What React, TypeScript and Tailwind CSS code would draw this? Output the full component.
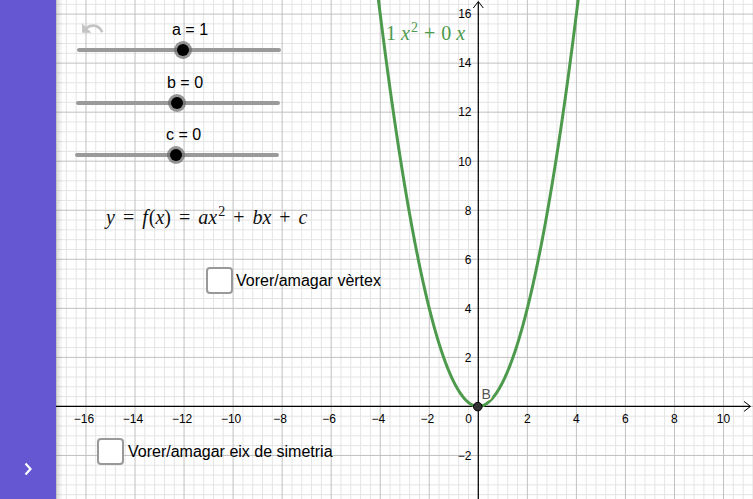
import React from "react";

const OX = 478.3;
const OY = 406.4;
const S = 24.52;
const MINOR = S * 0.4;

function Graph() {
  const vLines: { x: number; major: boolean }[] = [];
  for (let k = -43; k <= 28; k++) {
    vLines.push({ x: OX + k * MINOR, major: k % 5 === 0 });
  }
  const hLines: { y: number; major: boolean }[] = [];
  for (let k = -42; k <= 10; k++) {
    hLines.push({ y: OY + k * MINOR, major: k % 5 === 0 });
  }
  const xLabels: number[] = [];
  for (let v = -16; v <= 10; v += 2) if (v !== 0) xLabels.push(v);
  const yLabels: number[] = [-2, 2, 4, 6, 8, 10, 12, 14, 16];
  const pts: string[] = [];
  for (let x = -4.25; x <= 4.2501; x += 0.02) {
    const px = OX + x * S;
    const py = OY - x * x * S;
    pts.push(`${px.toFixed(2)},${py.toFixed(2)}`);
  }
  const fmt = (v: number) => (v < 0 ? "\u2212" + Math.abs(v) : String(v));
  return (
    <svg
      className="absolute inset-0"
      width={697}
      height={499}
      viewBox="56 0 697 499"
      style={{ fontFamily: '"Liberation Sans", Arial, sans-serif' }}
    >
      {vLines
        .filter((l) => !l.major)
        .map((l, i) => (
          <line key={"vm" + i} x1={l.x} x2={l.x} y1={0} y2={499} stroke="#e4e4e4" strokeWidth={1} />
        ))}
      {hLines
        .filter((l) => !l.major)
        .map((l, i) => (
          <line key={"hm" + i} y1={l.y} y2={l.y} x1={56} x2={753} stroke="#e4e4e4" strokeWidth={1} />
        ))}
      {vLines
        .filter((l) => l.major)
        .map((l, i) => (
          <line key={"vM" + i} x1={l.x} x2={l.x} y1={0} y2={499} stroke="#c0c0c0" strokeWidth={1} />
        ))}
      {hLines
        .filter((l) => l.major)
        .map((l, i) => (
          <line key={"hM" + i} y1={l.y} y2={l.y} x1={56} x2={753} stroke="#c0c0c0" strokeWidth={1} />
        ))}
      {/* axes */}
      <line x1={56} x2={750} y1={OY} y2={OY} stroke="#000" strokeWidth={1.2} />
      <polyline points={`744,401.4 750.5,${OY} 744,411.4`} fill="none" stroke="#000" strokeWidth={1} />
      <line x1={OX} x2={OX} y1={2} y2={499} stroke="#000" strokeWidth={1.2} />
      <polyline points={`473.3,8 ${OX},1.5 483.3,8`} fill="none" stroke="#000" strokeWidth={1} />
      {/* labels */}
      {xLabels.map((v) => (
        <text key={"xl" + v} x={OX + v * S - (v < 0 ? 2 : 0)} y={422.5} fontSize={12} textAnchor="middle" fill="#000">
          {fmt(v)}
        </text>
      ))}
      <text x={468.7} y={422.5} fontSize={12} textAnchor="middle" fill="#000">
        0
      </text>
      {yLabels.map((v) => (
        <text key={"yl" + v} x={471.5} y={OY - v * S + 4.3} fontSize={12} textAnchor="end" fill="#000">
          {fmt(v)}
        </text>
      ))}
      {/* parabola */}
      <polyline points={pts.join(" ")} fill="none" stroke="#4d9a4d" strokeWidth={3} strokeLinejoin="round" />
      {/* point B */}
      <text x={481.5} y={398.5} fontSize={14} fill="#555" stroke="#fff" strokeWidth={3} paintOrder="stroke">
        B
      </text>
      <circle cx={477.8} cy={406.6} r={4.3} fill="#333" stroke="#000" strokeWidth={1} />
    </svg>
  );
}

function Slider({ label, pad, knob }: { label: string; pad: string; knob: string }) {
  return (
    <div className="flex w-[204px] flex-col gap-[8px]">
      <div className={`${pad} text-[16px] leading-[20px] text-black`}>{label}</div>
      <div className="relative h-[4px] rounded-full bg-[#9a9a9a]">
        <div className={`absolute top-1/2 ${knob} flex h-[18px] w-[18px] -translate-x-1/2 -translate-y-1/2 items-center justify-center rounded-full bg-[#6a6a6a]/70`}>
          <div className="h-[12px] w-[12px] rounded-full bg-black" />
        </div>
      </div>
    </div>
  );
}

function Check({ text, gap }: { text: string; gap: string }) {
  return (
    <label className={`flex items-center ${gap} text-[16px] leading-[20px] text-black`}>
      <span className="h-[27px] w-[27px] rounded-[4px] border-2 border-[#999] bg-white" />
      <span>{text}</span>
    </label>
  );
}

const serif = { fontFamily: '"Liberation Serif", "Times New Roman", serif' };

export default function App() {
  return (
    <div
      className="flex h-[499px] w-[753px] overflow-hidden bg-white"
      style={{ fontFamily: '"Liberation Sans", Arial, sans-serif' }}
    >
      <aside className="flex w-[56px] shrink-0 flex-col items-center justify-end bg-[#6557d2] pb-[23px]">
        <svg width="10" height="14" viewBox="0 0 10 14">
          <polyline points="2.5,1.5 7.5,7 2.5,12.5" fill="none" stroke="#fff" strokeWidth={2.2} />
        </svg>
      </aside>
      <main className="relative flex-1">
        <Graph />
        <div className="absolute left-0 top-0 h-full w-[7px] bg-gradient-to-r from-black/15 to-transparent" />

        {/* undo icon */}
        <svg className="absolute left-[24px] top-[16px]" width="25" height="25" viewBox="0 0 24 24">
          <path
            d="M12.5 8c-2.65 0-5.05.99-6.9 2.6L2 7v9h9l-3.62-3.62c1.39-1.16 3.16-1.88 5.12-1.88 3.54 0 6.55 2.31 7.6 5.5l2.37-.78C21.08 11.03 17.15 8 12.5 8z"
            fill="#c4c4c4"
          />
        </svg>

        {/* sliders */}
        <div className="absolute left-[19px] top-[20px] flex flex-col gap-[20.5px]">
          <div className="pl-[2px]">
            <Slider label="a = 1" pad="pl-[95px]" knob="left-[106px]" />
          </div>
          <div className="pl-[1px]">
            <Slider label="b = 0" pad="pl-[91px]" knob="left-[101px]" />
          </div>
          <Slider label="c = 0" pad="pl-[91px]" knob="left-[101px]" />
        </div>

        {/* formula */}
        <div
          className="absolute left-[50px] top-[205px] whitespace-nowrap text-[20px] leading-[24px] text-[#111]"
          style={serif}
        >
          <i>y</i>
          <span className="mx-[8px]">=</span>
          <i className="pr-[1px]">f</i>(<i>x</i>)<span className="mx-[8px]">=</span>
          <i>ax</i>
          <sup className="-top-[0.6em] ml-[1px] text-[14px]">2</sup>
          <span className="mx-[8px]">+</span>
          <i>bx</i>
          <span className="mx-[8px]">+</span>
          <i>c</i>
        </div>

        {/* curve label */}
        <div
          className="absolute left-[330px] top-[21px] whitespace-nowrap text-[20px] leading-[24px] text-[#4d9a4d]"
          style={serif}
        >
          1 <i>x</i>
          <sup className="-top-[0.6em] ml-[1px] text-[14px]">2</sup>
          <span className="mx-[6px]">+</span>0 <i>x</i>
        </div>

        {/* checkboxes */}
        <div className="absolute left-[150px] top-[267px]">
          <Check text="Vorer/amagar vèrtex" gap="gap-[3px]" />
        </div>
        <div className="absolute left-[41px] top-[438px]">
          <Check text="Vorer/amagar eix de simetria" gap="gap-[4px]" />
        </div>
      </main>
    </div>
  );
}
